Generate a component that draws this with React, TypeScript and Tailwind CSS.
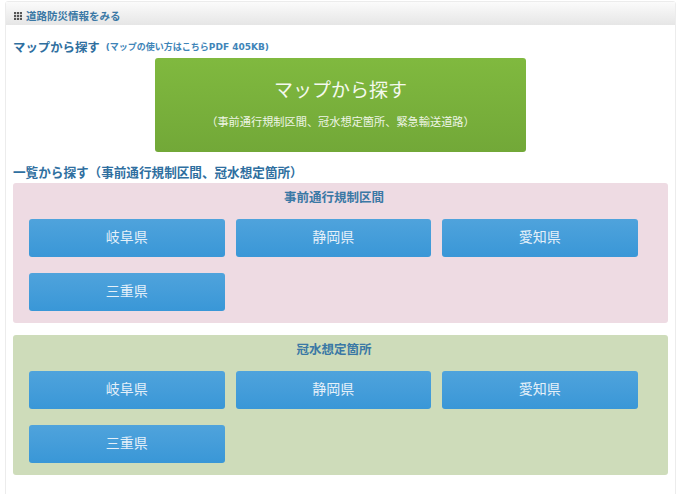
const cjk = { fontFamily: '"DejaVu Sans", "Noto Sans CJK JP", sans-serif' }

const PREFS = ['岐阜県', '静岡県', '愛知県', '三重県']

function PrefGrid() {
  return (
    <div className="flex w-[610px] flex-wrap gap-x-[11px] gap-y-4">
      {PREFS.map((p) => (
        <a
          key={p}
          className="flex h-[38px] w-[195.5px] items-center justify-center rounded-[3px] bg-gradient-to-b from-[#4fa3dc] to-[#3997d7] pb-[2px] text-[14px] text-[#e4f0f9]"
        >
          {p}
        </a>
      ))}
    </div>
  )
}

function Region({ title, bg }: { title: string; bg: string }) {
  return (
    <div className={`${bg} h-[140px] rounded-[3px] pt-[7px] pl-[16px]`}>
      <h4 className="mb-[14px] w-[610px] text-center text-[12.5px] leading-[15px] font-bold text-[#3a78a5]">{title}</h4>
      <PrefGrid />
    </div>
  )
}

export default function App() {
  return (
    <div className="h-[494px] w-[680px] overflow-hidden bg-white pt-[1px] pr-[4px] pl-[5px]" style={cjk}>
      <div className="h-[520px] rounded-t-[3px] border border-[#ececec] bg-white">
        <div className="flex h-[23px] items-center bg-gradient-to-b from-[#fbfbfb] to-[#e6e6e6] pt-[5px] pl-[8px]">
          <svg width="8" height="8" viewBox="0 0 9 9" className="mr-[4px] mb-[1px] fill-[#555]">
            <rect x="0" y="0" width="2.4" height="2.4" />
            <rect x="3.3" y="0" width="2.4" height="2.4" />
            <rect x="6.6" y="0" width="2.4" height="2.4" />
            <rect x="0" y="3.3" width="2.4" height="2.4" />
            <rect x="3.3" y="3.3" width="2.4" height="2.4" />
            <rect x="6.6" y="3.3" width="2.4" height="2.4" />
            <rect x="0" y="6.6" width="2.4" height="2.4" />
            <rect x="3.3" y="6.6" width="2.4" height="2.4" />
            <rect x="6.6" y="6.6" width="2.4" height="2.4" />
          </svg>
          <span className="mt-[1px] text-[10.5px] font-bold text-[#3a78a5]">道路防災情報をみる</span>
        </div>
        <div className="pr-[7px] pl-[7px]">
          <h3 className="mt-[15px] flex h-[16px] items-center text-[12.4px] font-bold text-[#2f6f9f]">
            マップから探す
            <span className="ml-[6px] text-[9px] text-[#3f85b8]">(マップの使い方はこちらPDF 405KB)</span>
          </h3>
          <a className="mt-[2px] ml-[142px] flex h-[94px] w-[371px] flex-col items-center rounded-[3px] bg-gradient-to-b from-[#80b93f] to-[#72a838] text-white">
            <span className="mt-[19px] text-[19px] leading-[26px] text-[#f4f9ee]">マップから探す</span>
            <span className="mt-[12px] text-[11.2px] leading-[16px] text-[#eef5e5]">（事前通行規制区間、冠水想定箇所、緊急輸送道路）</span>
          </a>
          <h3 className="mt-[13px] mb-[2px] h-[16px] text-[12.6px] leading-[16px] font-bold text-[#2f6f9f]">
            一覧から探す（事前通行規制区間、冠水想定箇所）
          </h3>
          <div className="flex flex-col gap-[12px]">
            <Region title="事前通行規制区間" bg="bg-[#eedbe3]" />
            <Region title="冠水想定箇所" bg="bg-[#cedcba]" />
          </div>
        </div>
      </div>
    </div>
  )
}
